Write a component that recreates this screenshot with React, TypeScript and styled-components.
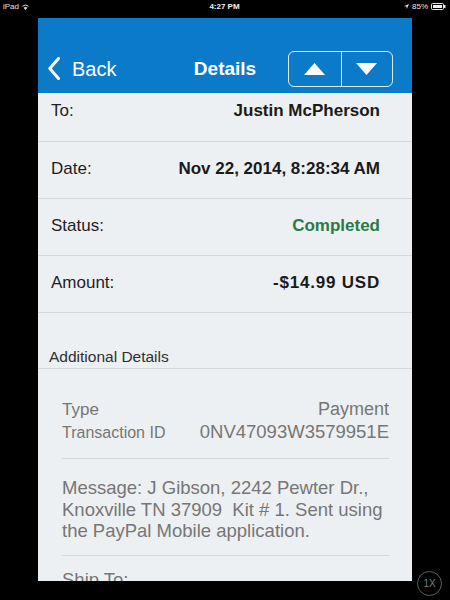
import React from "react";
import styled, { createGlobalStyle } from "styled-components";

const GlobalStyle = createGlobalStyle`
  html, body { margin: 0; padding: 0; background: #000; }
  body { font-family: "Liberation Sans", Arial, Helvetica, sans-serif; }
  #root { width: 450px; height: 600px; }
  * { box-sizing: border-box; }
`;

const Screen = styled.div`
  position: relative;
  width: 450px;
  height: 600px;
  background: #000;
  display: flex;
  flex-direction: column;
  overflow: hidden;
`;

const StatusBar = styled.div`
  flex: none;
  height: 18px;
  display: grid;
  grid-template-columns: 1fr auto 1fr;
  align-items: start;
  padding: 1px 4px 0 3px;
  color: #e4e4e4;
  font-size: 8px;
  line-height: 11px;
`;

const StatusGroup = styled.div<{ $align: "start" | "end" }>`
  display: flex;
  align-items: center;
  gap: 3px;
  justify-content: ${(p) => (p.$align === "end" ? "flex-end" : "flex-start")};
`;

const Clock = styled.span`
  font-weight: 700;
  color: #f2f2f2;
`;

const Panel = styled.div`
  flex: none;
  width: 374px;
  height: 563px;
  margin: 0 auto;
  background: #edf0f2;
  display: flex;
  flex-direction: column;
  overflow: hidden;
  & > * {
    flex: none;
  }
`;

const NavBar = styled.div`
  height: 75px;
  background: #0b7bc9;
  padding: 26px 10px 0 10px;
  display: grid;
  grid-template-columns: 1fr auto 1fr;
  align-items: center;
  color: #fff;
`;

const BackButton = styled.div`
  display: flex;
  align-items: center;
  gap: 12px;
  font-size: 20px;
  line-height: 24px;
`;

const Title = styled.div`
  font-size: 19px;
  font-weight: 700;
  line-height: 24px;
`;

const Segmented = styled.div`
  justify-self: end;
  margin-right: 9px;
  width: 105px;
  height: 36px;
  border: 1.5px solid rgba(255, 255, 255, 0.85);
  border-radius: 6px;
  display: grid;
  grid-template-columns: 1fr 1fr;
`;

const Segment = styled.div<{ $divider?: boolean }>`
  display: flex;
  align-items: center;
  justify-content: center;
  border-left: ${(p) => (p.$divider ? "1.5px solid rgba(255,255,255,0.85)" : "none")};
`;

const List = styled.div`
  display: flex;
  flex-direction: column;
  & > * {
    flex: none;
  }
`;

const Row = styled.div<{ $clipped?: boolean }>`
  height: ${(p) => (p.$clipped ? "49px" : "57px")};
  display: flex;
  align-items: center;
  justify-content: space-between;
  padding: ${(p) => (p.$clipped ? "0 32px 12px 13px" : "0 32px 3px 13px")};
  border-bottom: 1px solid #d4d8db;
  font-size: 17px;
  line-height: 20px;
`;

const Label = styled.span`
  color: #1e1e1e;
`;

const Value = styled.span<{ $tone?: "green"; $spaced?: boolean }>`
  font-weight: 700;
  color: ${(p) => (p.$tone === "green" ? "#2a7a48" : "#1a1a1a")};
  letter-spacing: ${(p) => (p.$spaced ? "0.8px" : "0")};
`;

const SectionHeader = styled.div`
  height: 56px;
  display: flex;
  align-items: flex-end;
  padding: 0 13px 2px 11px;
  border-bottom: 1px solid #d4d8db;
  font-size: 15.5px;
  line-height: 18px;
  color: #2e2e2e;
`;

const DetailBody = styled.div`
  padding: 0 23px 0 24px;
  color: #767676;
`;

const DetailGroup = styled.div<{ $top: number; $bottom: number; $last?: boolean }>`
  padding: ${(p) => `${p.$top}px 0 ${p.$bottom}px`};
  border-bottom: ${(p) => (p.$last ? "none" : "1px solid #d4d8db")};
`;

const DetailLine = styled.div`
  display: flex;
  justify-content: space-between;
  align-items: baseline;
  line-height: 22px;
`;

const DetailKey = styled.span<{ $small?: boolean }>`
  font-size: ${(p) => (p.$small ? "16px" : "17px")};
`;

const DetailValue = styled.span<{ $large?: boolean }>`
  font-size: ${(p) => (p.$large ? "18.5px" : "18px")};
`;

const Message = styled.div`
  font-size: 18.5px;
  line-height: 21.5px;
`;

const ShipTo = styled.div`
  font-size: 18.5px;
  line-height: 22px;
`;

const ZoomBadge = styled.div`
  position: absolute;
  left: 417px;
  top: 571px;
  width: 25px;
  height: 25px;
  border-radius: 50%;
  border: 1px solid #5e5e5e;
  color: #7c7c7c;
  font-size: 10px;
  display: flex;
  align-items: center;
  justify-content: center;
`;

const Wifi = () => (
  <svg width="7" height="6" viewBox="0 0 14 12">
    <path d="M7 12 L3.2 7.6 A5.5 5.5 0 0 1 10.8 7.6 Z" fill="#e4e4e4" />
    <path d="M1 4.6 A9 9 0 0 1 13 4.6" stroke="#e4e4e4" strokeWidth="2" fill="none" />
  </svg>
);

const LocationArrow = () => (
  <svg width="5" height="5" viewBox="0 0 10 10">
    <path d="M10 0 L0 4.5 L5 5 L5.5 10 Z" fill="#e4e4e4" />
  </svg>
);

const Battery = () => (
  <svg width="15" height="7" viewBox="0 0 15 7">
    <rect x="0.5" y="0.5" width="12" height="6" rx="1" fill="none" stroke="#e4e4e4" strokeWidth="1" />
    <rect x="2" y="2" width="9" height="3" fill="#f0f0f0" />
    <rect x="13" y="2" width="1.5" height="3" fill="#e4e4e4" />
  </svg>
);

const Chevron = () => (
  <svg width="12" height="23" viewBox="0 0 12 23">
    <polyline points="10.5,1.5 1.8,11.5 10.5,21.5" fill="none" stroke="#fff" strokeWidth="3" strokeLinecap="round" strokeLinejoin="round" />
  </svg>
);

const Triangle = ({ up }: { up?: boolean }) => (
  <svg width="21" height="12" viewBox="0 0 21 12">
    <path d={up ? "M10.5 0 L21 12 L0 12 Z" : "M0 0 L21 0 L10.5 12 Z"} fill="#fff" />
  </svg>
);

export default function App() {
  return (
    <>
      <GlobalStyle />
      <Screen>
        <StatusBar>
          <StatusGroup $align="start">
            <span>iPad</span>
            <Wifi />
          </StatusGroup>
          <Clock>4:27 PM</Clock>
          <StatusGroup $align="end">
            <LocationArrow />
            <span>85%</span>
            <Battery />
          </StatusGroup>
        </StatusBar>
        <Panel>
          <NavBar>
            <BackButton>
              <Chevron />
              <span>Back</span>
            </BackButton>
            <Title>Details</Title>
            <Segmented>
              <Segment>
                <Triangle up />
              </Segment>
              <Segment $divider>
                <Triangle />
              </Segment>
            </Segmented>
          </NavBar>
          <List>
            <Row $clipped>
              <Label>To:</Label>
              <Value>Justin McPherson</Value>
            </Row>
            <Row>
              <Label>Date:</Label>
              <Value>Nov 22, 2014, 8:28:34 AM</Value>
            </Row>
            <Row>
              <Label>Status:</Label>
              <Value $tone="green">Completed</Value>
            </Row>
            <Row>
              <Label>Amount:</Label>
              <Value $spaced>-$14.99 USD</Value>
            </Row>
          </List>
          <SectionHeader>Additional Details</SectionHeader>
          <DetailBody>
            <DetailGroup $top={29} $bottom={14}>
              <DetailLine>
                <DetailKey>Type</DetailKey>
                <DetailValue>Payment</DetailValue>
              </DetailLine>
              <DetailLine>
                <DetailKey $small>Transaction ID</DetailKey>
                <DetailValue $large>0NV47093W3579951E</DetailValue>
              </DetailLine>
            </DetailGroup>
            <DetailGroup $top={18} $bottom={13.5}>
              <Message>
                Message: J Gibson, 2242 Pewter Dr.,
                <br />
                Knoxville TN 37909&nbsp; Kit # 1. Sent using
                <br />
                the PayPal Mobile application.
              </Message>
            </DetailGroup>
            <DetailGroup $top={13} $bottom={0} $last>
              <ShipTo>Ship To:</ShipTo>
            </DetailGroup>
          </DetailBody>
        </Panel>
        <ZoomBadge>1X</ZoomBadge>
      </Screen>
    </>
  );
}
